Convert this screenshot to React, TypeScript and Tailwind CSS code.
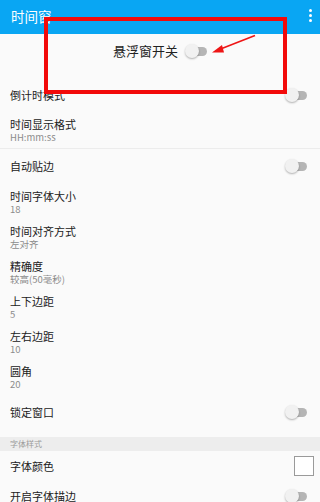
import React from "react";

function Toggle() {
  return (
    <div className="relative w-[22px] h-[14px] shrink-0">
      <div className="absolute left-[3px] top-[3px] w-[19px] h-[9px] rounded-full bg-[#b5b5b5]" />
      <div className="absolute left-0 top-0 w-[14px] h-[14px] rounded-full bg-[#f1f1f1] shadow-[0_1px_2px_rgba(0,0,0,0.3)]" />
    </div>
  );
}

function Two({ title, sub }: { title: string; sub: string }) {
  return (
    <div className="h-[35px] pl-[10px] pt-[6px] flex flex-col">
      <div className="text-[11px] leading-[14px] text-[#212121]">{title}</div>
      <div className="text-[9.5px] leading-[12px] text-[#8c8c8c]">{sub}</div>
    </div>
  );
}

function SwitchRow({ title, h }: { title: string; h: string }) {
  return (
    <div className={`${h} pl-[10px] pr-[13px] flex items-center justify-between`}>
      <div className="text-[11px] leading-[14px] text-[#212121]">{title}</div>
      <Toggle />
    </div>
  );
}

export default function App() {
  return (
    <div
      className="relative w-[320px] h-[502px] overflow-hidden bg-[#fafafa]"
      style={{ fontFamily: '"Noto Sans CJK SC", "Noto Sans", sans-serif' }}
    >
      <div className="h-[34px] bg-[#09a6f3] flex items-center justify-between pl-[11px] pr-[8px]">
        <div className="text-white text-[13.5px] leading-[16px] -mt-[3px]">时间窗</div>
        <div className="flex flex-col gap-[2px] -mt-[3px]">
          <div className="w-[3px] h-[3px] rounded-full bg-white" />
          <div className="w-[3px] h-[3px] rounded-full bg-white" />
          <div className="w-[3px] h-[3px] rounded-full bg-white" />
        </div>
      </div>

      <div className="h-[34px] flex items-center justify-center gap-[7px] mb-[10px]">
        <div className="text-[13px] leading-[16px] text-[#222]">悬浮窗开关</div>
        <Toggle />
      </div>

      <SwitchRow title="倒计时模式" h="h-[34px]" />

      <div className="h-[37px] pl-[10px] pt-[5px] flex flex-col border-b border-[#ececec]">
        <div className="text-[11px] leading-[14px] text-[#212121]">时间显示格式</div>
        <div className="text-[9.5px] leading-[13px] text-[#8c8c8c]">HH:mm:ss</div>
      </div>

      <SwitchRow title="自动贴边" h="h-[34px]" />

      <Two title="时间字体大小" sub="18" />
      <Two title="时间对齐方式" sub="左对齐" />
      <Two title="精确度" sub="较高(50毫秒)" />
      <Two title="上下边距" sub="5" />
      <Two title="左右边距" sub="10" />
      <Two title="圆角" sub="20" />

      <SwitchRow title="锁定窗口" h="h-[38px]" />
      <div className="h-[6px]" />
      <div className="h-[14px] bg-[#ededed] pl-[10px] flex items-center">
        <div className="text-[8px] leading-[10px] text-[#9a9a9a]">字体样式</div>
      </div>

      <div className="h-[30px] pl-[10px] pr-[6px] flex items-center justify-between">
        <div className="text-[11px] leading-[14px] text-[#212121]">字体颜色</div>
        <div className="w-[20px] h-[20px] bg-white border-[1.5px] border-[#9a9a9a]" />
      </div>

      <SwitchRow title="开启字体描边" h="h-[30px]" />

      {/* annotation overlay */}
      <div className="absolute left-[44px] top-[17px] w-[243px] h-[77px] border-[4px] border-[#f20a0a]" />
      <svg className="absolute left-0 top-0" width="320" height="100" viewBox="0 0 320 100">
        <line x1="255" y1="35.5" x2="218" y2="50" stroke="#ee1515" strokeWidth="1.6" />
        <polygon points="212,52.5 222,45 224,52.5" fill="#ee1515" />
      </svg>
    </div>
  );
}
